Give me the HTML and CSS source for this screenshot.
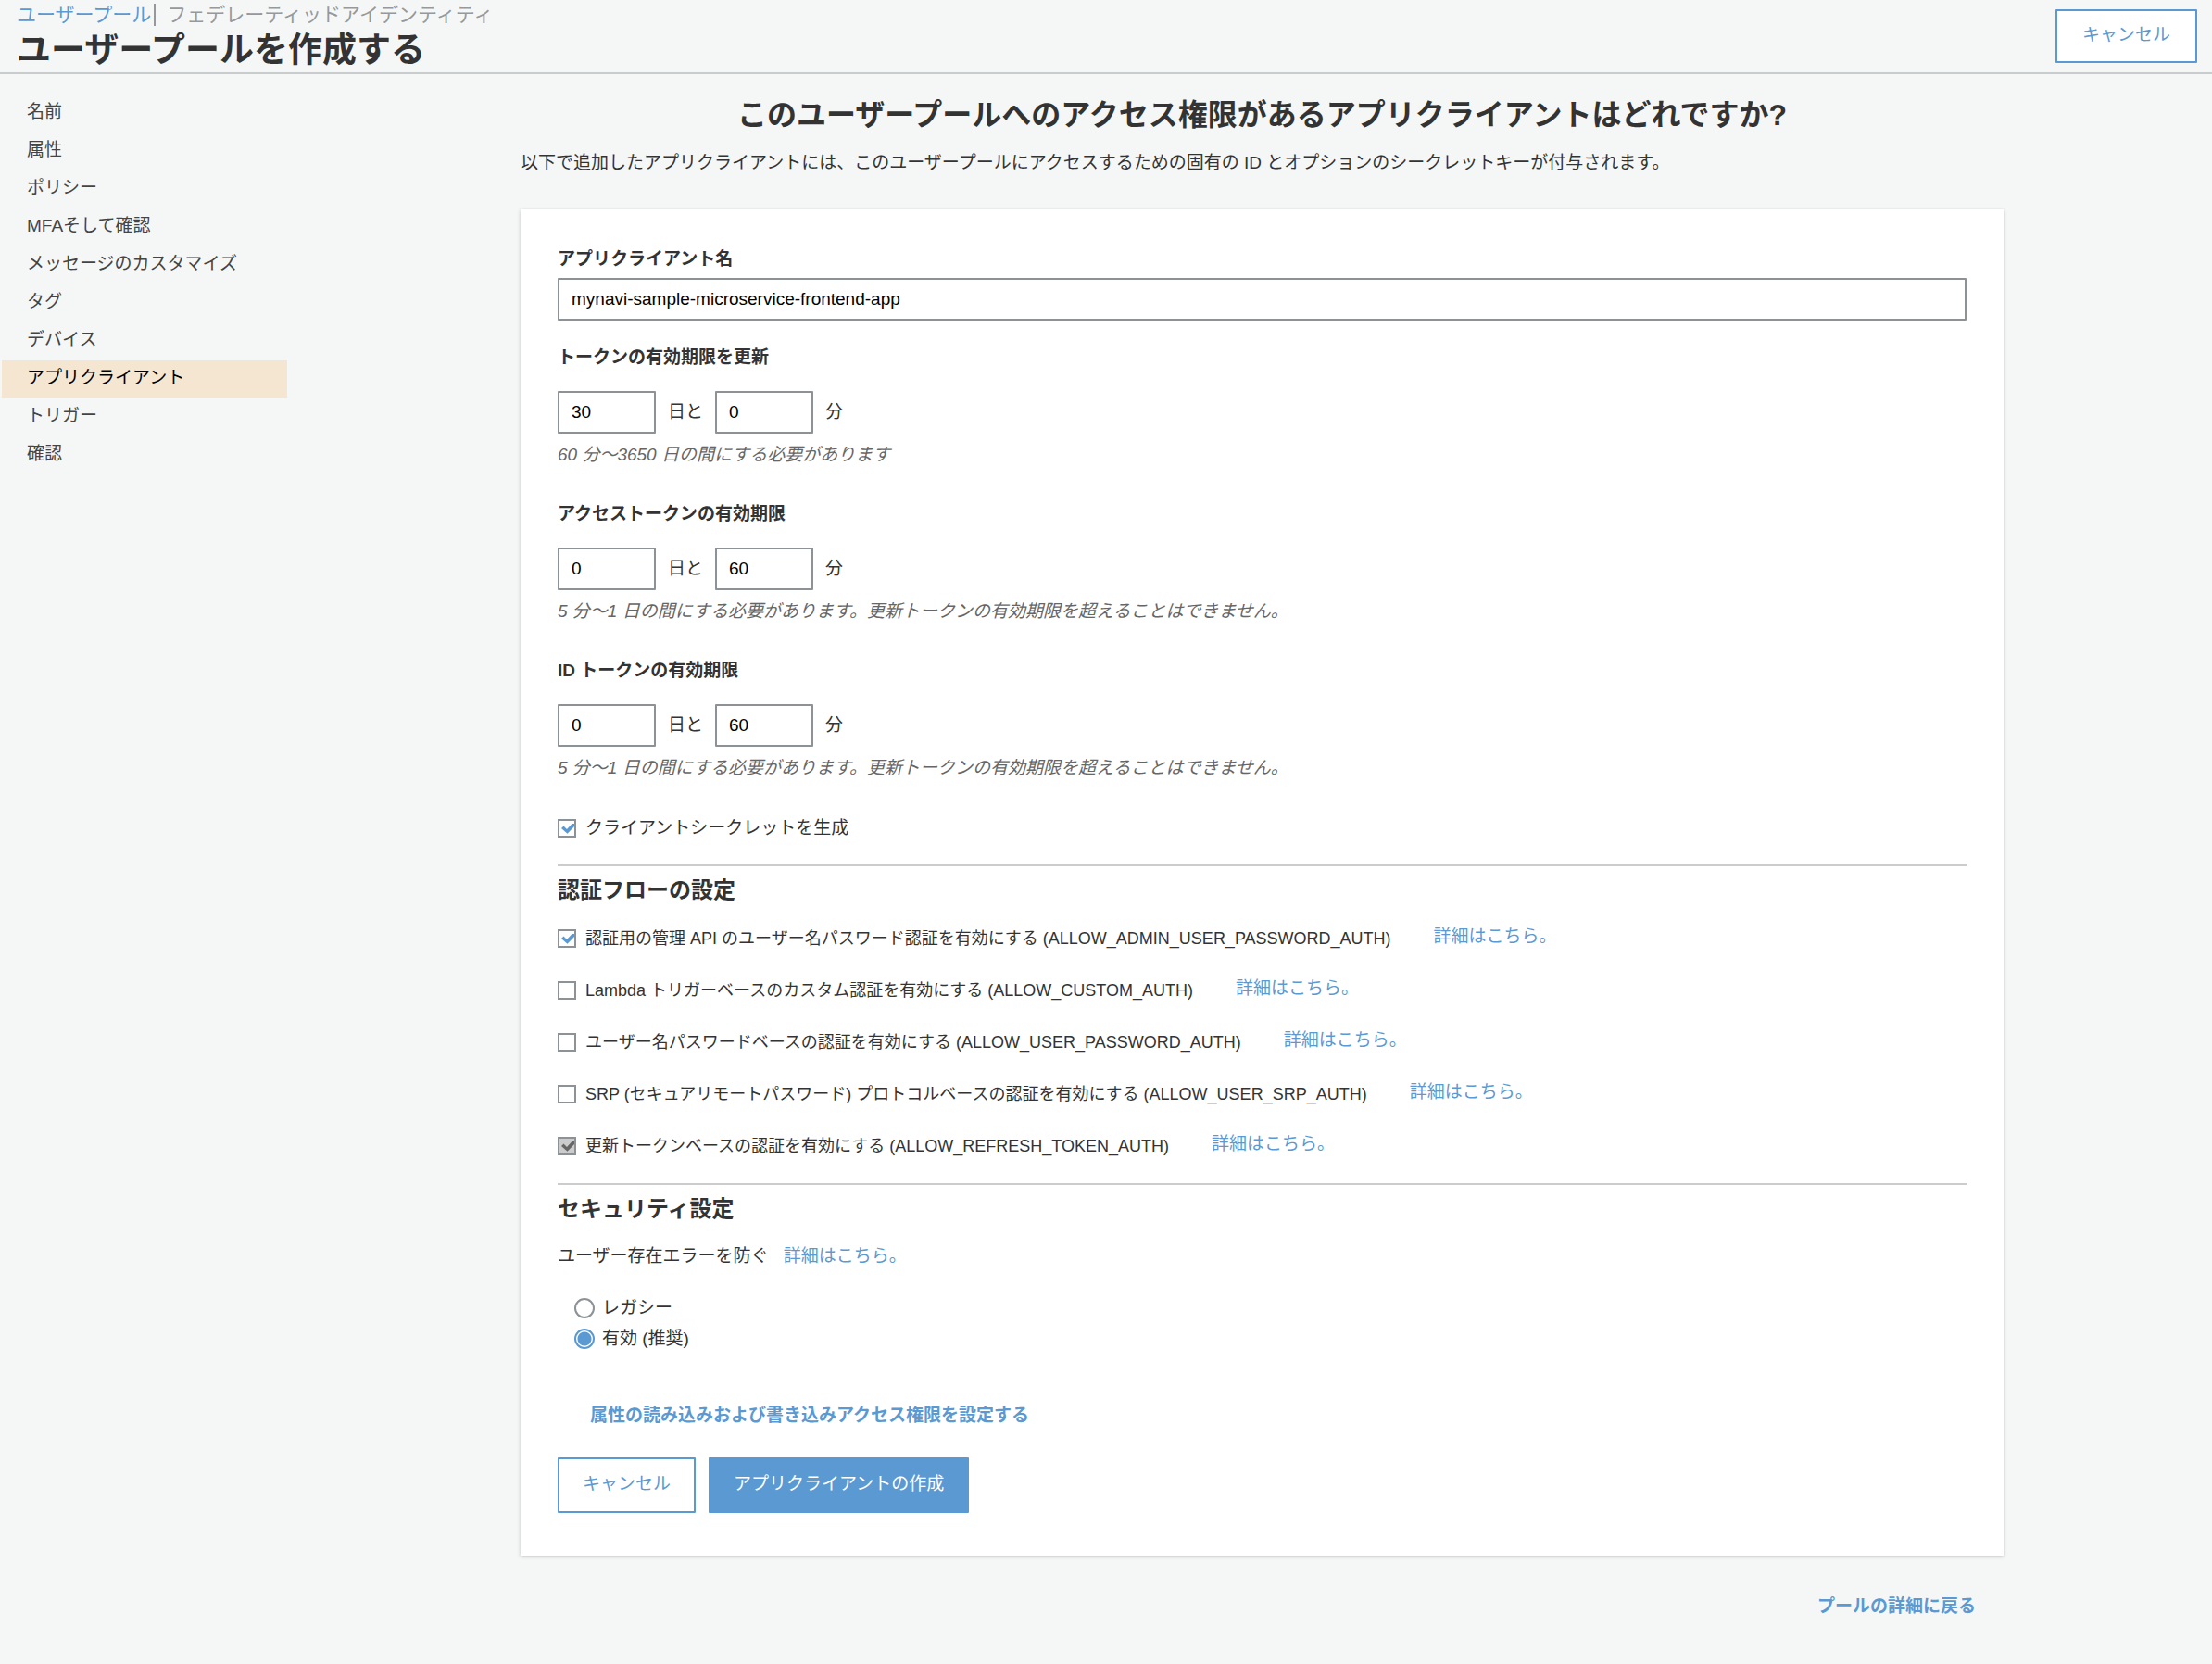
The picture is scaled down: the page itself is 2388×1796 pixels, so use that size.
FILE: index.html
```html
<!DOCTYPE html>
<html lang="ja">
<head>
<meta charset="utf-8">
<meta name="viewport" content="width=device-width, initial-scale=1">
<title>ユーザープールを作成する</title>
<link rel="stylesheet" href="styles.css">
</head>
<body>
<header class="page-header">
  <div class="heading">
    <nav class="switcher" aria-label="サービス">
      <a class="switch current" href="#pools">ユーザープール</a>
      <a class="switch" href="#federated">フェデレーティッドアイデンティティ</a>
    </nav>
    <h1 class="page-title">ユーザープールを作成する</h1>
  </div>
  <button class="btn" type="button">キャンセル</button>
</header>

<div class="layout">
  <nav class="steps" aria-label="手順">
    <a class="step" href="#name">名前</a>
    <a class="step" href="#attributes">属性</a>
    <a class="step" href="#policy">ポリシー</a>
    <a class="step" href="#mfa">MFAそして確認</a>
    <a class="step" href="#message">メッセージのカスタマイズ</a>
    <a class="step" href="#tags">タグ</a>
    <a class="step" href="#devices">デバイス</a>
    <a class="step active" href="#clients" aria-current="step">アプリクライアント</a>
    <a class="step" href="#triggers">トリガー</a>
    <a class="step" href="#review">確認</a>
  </nav>

  <main class="content">
    <h2 class="question">このユーザープールへのアクセス権限があるアプリクライアントはどれですか?</h2>
    <p class="intro">以下で追加したアプリクライアントには、このユーザープールにアクセスするための固有の ID とオプションのシークレットキーが付与されます。</p>

    <form class="card">
      <div class="field">
        <label class="label" for="client-name">アプリクライアント名</label>
        <input class="input" id="client-name" type="text" value="mynavi-sample-microservice-frontend-app">
      </div>

      <div class="durations">
        <div class="duration">
          <div class="label">トークンの有効期限を更新</div>
          <div class="duration-row">
            <input class="input short" id="refresh-days" type="text" value="30">
            <label for="refresh-days">日と</label>
            <input class="input short" id="refresh-minutes" type="text" value="0">
            <label for="refresh-minutes">分</label>
          </div>
          <p class="hint">60 分〜3650 日の間にする必要があります</p>
        </div>
        <div class="duration">
          <div class="label">アクセストークンの有効期限</div>
          <div class="duration-row">
            <input class="input short" id="access-days" type="text" value="0">
            <label for="access-days">日と</label>
            <input class="input short" id="access-minutes" type="text" value="60">
            <label for="access-minutes">分</label>
          </div>
          <p class="hint">5 分〜1 日の間にする必要があります。更新トークンの有効期限を超えることはできません。</p>
        </div>
        <div class="duration">
          <div class="label">ID トークンの有効期限</div>
          <div class="duration-row">
            <input class="input short" id="id-days" type="text" value="0">
            <label for="id-days">日と</label>
            <input class="input short" id="id-minutes" type="text" value="60">
            <label for="id-minutes">分</label>
          </div>
          <p class="hint">5 分〜1 日の間にする必要があります。更新トークンの有効期限を超えることはできません。</p>
        </div>
      </div>

      <div class="option">
        <input class="check" id="secret" type="checkbox" checked>
        <label for="secret">クライアントシークレットを生成</label>
      </div>

      <section class="section">
        <h3 class="section-title">認証フローの設定</h3>
        <div class="flows">
          <div class="option">
            <input class="check" id="flow-admin" type="checkbox" checked>
            <label for="flow-admin">認証用の管理 API のユーザー名パスワード認証を有効にする (ALLOW_ADMIN_USER_PASSWORD_AUTH)</label>
            <a class="more" href="#flow-admin-help">詳細はこちら。</a>
          </div>
          <div class="option">
            <input class="check" id="flow-custom" type="checkbox">
            <label for="flow-custom">Lambda トリガーベースのカスタム認証を有効にする (ALLOW_CUSTOM_AUTH)</label>
            <a class="more" href="#flow-custom-help">詳細はこちら。</a>
          </div>
          <div class="option">
            <input class="check" id="flow-password" type="checkbox">
            <label for="flow-password">ユーザー名パスワードベースの認証を有効にする (ALLOW_USER_PASSWORD_AUTH)</label>
            <a class="more" href="#flow-password-help">詳細はこちら。</a>
          </div>
          <div class="option">
            <input class="check" id="flow-srp" type="checkbox">
            <label for="flow-srp">SRP (セキュアリモートパスワード) プロトコルベースの認証を有効にする (ALLOW_USER_SRP_AUTH)</label>
            <a class="more" href="#flow-srp-help">詳細はこちら。</a>
          </div>
          <div class="option">
            <input class="check" id="flow-refresh" type="checkbox" checked disabled>
            <label for="flow-refresh">更新トークンベースの認証を有効にする (ALLOW_REFRESH_TOKEN_AUTH)</label>
            <a class="more" href="#flow-refresh-help">詳細はこちら。</a>
          </div>
        </div>
      </section>

      <section class="section">
        <h3 class="section-title">セキュリティ設定</h3>
        <p class="security-text">ユーザー存在エラーを防ぐ <a class="link" href="#security-help">詳細はこちら。</a></p>
        <div class="radios">
          <div class="option">
            <input class="radio" id="legacy" type="radio" name="existence">
            <label for="legacy">レガシー</label>
          </div>
          <div class="option">
            <input class="radio" id="enabled" type="radio" name="existence" checked>
            <label for="enabled">有効 (推奨)</label>
          </div>
        </div>
      </section>

      <a class="link strong permissions" href="#permissions">属性の読み込みおよび書き込みアクセス権限を設定する</a>

      <div class="actions">
        <button class="btn" type="button">キャンセル</button>
        <button class="btn primary" type="submit">アプリクライアントの作成</button>
      </div>
    </form>

    <a class="link strong back" href="#pool">プールの詳細に戻る</a>
  </main>
</div>
</body>
</html>
```

FILE: styles.css
```css
* {
  box-sizing: border-box;
}

body {
  margin: 0;
  min-height: 100vh;
  background: #f5f7f7;
  color: #333;
  font-family: "Liberation Sans", "Noto Sans CJK JP", sans-serif;
  font-size: 19px;
  line-height: 28px;
}

h1, h2, h3, p {
  margin: 0;
}

a {
  text-decoration: none;
}

button, input {
  font: inherit;
}

/* Header */
.page-header {
  display: flex;
  justify-content: space-between;
  align-items: flex-start;
  height: 80px;
  padding: 0 16px 0 18px;
  border-bottom: 2px solid #c9cccc;
}

.page-header .btn {
  margin-top: 10px;
  height: 58px;
  padding: 0 27px 2px;
}

.switcher {
  display: flex;
  align-items: center;
  padding-top: 4px;
}

.switch {
  font-size: 21px;
  line-height: 24px;
  color: #96999b;
}

.switch.current {
  margin-right: 12px;
  padding-right: 3px;
  border-right: 2px solid #96999b;
  color: #5b99d2;
}

.page-title {
  margin-top: 4px;
  font-size: 37px;
  line-height: 46px;
}

/* Step list */
.layout {
  display: flex;
  align-items: flex-start;
}

.steps {
  flex: 0 0 308px;
  display: flex;
  flex-direction: column;
  margin-left: 2px;
  padding-top: 22px;
}

.step {
  padding: 5px 27px 8px;
  color: #444;
}

.step.active {
  background: #f5e6d2;
  color: #000;
}

/* Content */
.content {
  flex: 1;
  display: flex;
  flex-direction: column;
  margin: 0 225px 47px 252px;
  padding-top: 22px;
}

.question {
  font-size: 32px;
  line-height: 44px;
  text-align: center;
}

.intro {
  margin-top: 16px;
}

.card {
  display: flex;
  flex-direction: column;
  margin-top: 36px;
  padding: 40px 40px 46px;
  background: #fff;
  box-shadow: 0 1px 4px rgba(0, 0, 0, 0.2);
}

.field {
  display: flex;
  flex-direction: column;
  gap: 6px;
}

.label {
  font-weight: 700;
}

.input {
  width: 100%;
  height: 46px;
  padding: 0 13px;
  border: 2px solid #8c9296;
  border-radius: 1px;
  background: #fff;
  color: #000;
}

.input.short {
  width: 106px;
}

.durations {
  display: flex;
  flex-direction: column;
  gap: 36px;
  margin: 26px 0 37px;
}

.duration-row {
  display: flex;
  align-items: center;
  gap: 13px;
  margin: 22px 0 9px;
}

.hint {
  color: #666;
  font-style: italic;
}

/* Tick boxes and radios */
.option {
  display: flex;
  align-items: center;
  gap: 10px;
}

.check, .radio {
  appearance: none;
  flex: none;
  margin: 0;
  border: 2px solid #8c9296;
  background: #fff center / 100% 100% no-repeat;
}

.check {
  width: 20px;
  height: 20px;
}

.check:checked {
  background-image: url("data:image/svg+xml,%3Csvg xmlns='http://www.w3.org/2000/svg' viewBox='0 0 16 16'%3E%3Cpath d='M2 8 4.5 5.500 8 9 13.500 3 16 3 16 6 8.500 13.800Z' fill='%235b99d2'/%3E%3C/svg%3E");
}

.check:disabled {
  background-color: #ccc;
  background-image: url("data:image/svg+xml,%3Csvg xmlns='http://www.w3.org/2000/svg' viewBox='0 0 16 16'%3E%3Cpath d='M2 8 4.5 5.500 8 9 13.500 3 16 3 16 6 8.500 13.800Z' fill='%23666'/%3E%3C/svg%3E");
}

.radio {
  width: 22px;
  height: 22px;
  border-radius: 50%;
}

.radio:checked {
  border-color: #5b99d2;
  background: radial-gradient(circle, #5b99d2 7px, #fff 8px);
}

/* Card sections */
.section {
  margin-top: 25px;
  padding-top: 10px;
  border-top: 2px solid #ccc;
}

.section-title {
  font-size: 24px;
  line-height: 32px;
}

.flows {
  display: flex;
  flex-direction: column;
  gap: 25px;
  margin-top: 20px;
}

.flows label {
  font-size: 18px;
}

.link, .more {
  color: #5b99d2;
}

.more {
  margin: 0 0 3px 36px;
}

.strong {
  font-weight: 700;
}

.security-text {
  display: flex;
  gap: 16px;
  margin-top: 21px;
}

.radios {
  display: flex;
  flex-direction: column;
  gap: 5px;
  margin-top: 28px;
  padding-left: 18px;
}

.radios .option {
  gap: 8px;
}

.permissions {
  align-self: flex-start;
  margin: 55px 0 31px 35px;
}

.actions {
  display: flex;
  gap: 14px;
}

.btn {
  height: 60px;
  padding: 0 25px 2px;
  border: 2px solid #5b99d2;
  border-radius: 1px;
  background: #fff;
  color: #5b99d2;
}

.btn.primary {
  background: #5b99d2;
  color: #fff;
}

.back {
  align-self: flex-end;
  margin: 41px 30px 0 0;
}
```
